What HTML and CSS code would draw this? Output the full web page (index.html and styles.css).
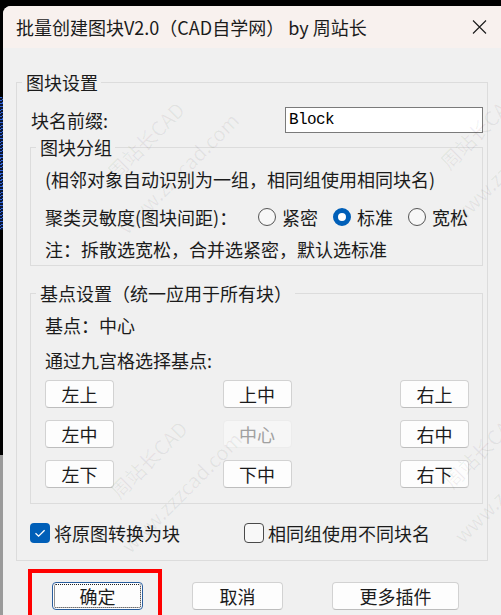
FILE: index.html
```html
<!DOCTYPE html>
<html lang="zh-CN">
<head>
<meta charset="utf-8">
<title>批量创建图块</title>
<link rel="stylesheet" href="styles.css">
</head>
<body>
<div class="screen">
  <div class="strip"></div>
  <div class="window">
    <div class="titlebar">
      <span class="title">批量创建图块V2.0（CAD自学网） by 周站长</span>
      <svg class="close" width="15" height="14" viewBox="0 0 15 14"><path d="M1 0.5 L14 13.5 M14 0.5 L1 13.5" stroke="#1b1b1b" stroke-width="1.1" fill="none"/></svg>
    </div>
    <div class="client">
      <fieldset class="group outer">
        <legend>图块设置</legend>
        <div class="prefix-row">
          <label class="prefix-label" for="prefix">块名前缀:</label>
          <input id="prefix" class="prefix-input" type="text" value="Block">
        </div>
        <fieldset class="group inner g1">
          <legend>图块分组</legend>
          <div class="line first">(相邻对象自动识别为一组，相同组使用相同块名)</div>
          <div class="line radio-row">
            <span class="radio-label">聚类灵敏度(图块间距)：</span>
            <span class="radio-item"><span class="radio"></span>紧密</span>
            <span class="radio-item"><span class="radio on"></span>标准</span>
            <span class="radio-item"><span class="radio"></span>宽松</span>
          </div>
          <div class="line note">注：拆散选宽松，合并选紧密，默认选标准</div>
        </fieldset>
        <fieldset class="group inner g2">
          <legend>基点设置（统一应用于所有块）</legend>
          <div class="line first">基点：中心</div>
          <div class="line hint">通过九宫格选择基点:</div>
          <div class="grid9">
            <button class="btn small">左上</button>
            <button class="btn small">上中</button>
            <button class="btn small">右上</button>
            <button class="btn small">左中</button>
            <button class="btn small disabled">中心</button>
            <button class="btn small">右中</button>
            <button class="btn small">左下</button>
            <button class="btn small">下中</button>
            <button class="btn small">右下</button>
          </div>
        </fieldset>
        <div class="checks">
          <span class="check-item first-check"><span class="checkbox on"><svg width="20" height="20" viewBox="0 0 20 20"><path d="M5.5 10.2 L8.6 13.2 L14.6 7.2" stroke="#fff" stroke-width="1.3" fill="none"/></svg></span>将原图转换为块</span>
          <span class="check-item"><span class="checkbox"></span>相同组使用不同块名</span>
        </div>
      </fieldset>
      <div class="actions">
        <button class="btn action primary">确定</button>
        <button class="btn action">取消</button>
        <button class="btn action wide">更多插件</button>
      </div>
    </div>
    <div class="wm wm-a"><div>周站长CAD</div><div>www.zzzcad.com</div></div>
    <div class="wm wm-b"><div>周站长CAD</div><div>www.zzzcad.com</div></div>
    <div class="wm wm-c"><div>周站长CAD</div><div>www.zzzcad.com</div></div>
    <div class="wm wm-d"><div>周站长CAD</div><div>www.zzzcad.com</div></div>
    <div class="highlight"></div>
  </div>
</div>
</body>
</html>
```
FILE: styles.css
```css
html, body {
  margin: 0;
  padding: 0;
}
body {
  width: 501px;
  height: 615px;
  overflow: hidden;
  background: #000;
  font-family: "Noto Sans CJK SC", "Liberation Sans", sans-serif;
  color: #1b1b1b;
}
.screen {
  display: flex;
  height: 615px;
}
.strip {
  width: 3px;
  flex: none;
  background:
    repeating-linear-gradient(160deg, #2f62d8 0 1px, #0a1632 1px 3px) 0 97px / 3px 133px no-repeat,
    linear-gradient(to bottom, #000 0 455px, #9a9a9a 455px);
}
.window {
  position: relative;
  margin-top: 6px;
  width: 498px;
  height: 609px;
  flex: none;
  border-top-left-radius: 8px;
  overflow: hidden;
  background: #f0f0f0;
}
.titlebar {
  height: 42px;
  background: #f8f1ee;
  display: flex;
  align-items: center;
  padding: 0 14px 0 13px;
}
.title {
  flex: 1;
  font-size: 18px;
  line-height: 1;
  color: #1b1b1b;
  white-space: nowrap;
}
.close {
  display: block;
  flex: none;
}
.client {
  padding: 22px 0 0 13px;
}
.group {
  margin: 0;
  min-width: 0;
  box-sizing: border-box;
  border: 1px solid #dcdcdc;
}
.group > legend {
  font-size: 18px;
  line-height: 24px;
  padding: 0 3px 0 4px;
  color: #1b1b1b;
  white-space: nowrap;
}
.outer {
  width: 472px;
  padding: 0 4px 17px 13px;
}
.outer > legend {
  margin-left: -8px;
}
.prefix-row {
  display: flex;
  align-items: center;
  height: 26px;
  margin-top: 13px;
}
.prefix-label {
  margin-left: 1px;
  font-size: 18px;
  line-height: 24px;
}
.prefix-input {
  margin: 0 0 0 auto;
  width: 198px;
  height: 26px;
  box-sizing: border-box;
  border: 1px solid #7a7a7a;
  background: #fff;
  padding: 0 0 0 3px;
  font-family: "Liberation Mono", monospace;
  font-size: 16px;
  letter-spacing: -0.6px;
  color: #000;
  outline: none;
}
.inner {
  width: 100%;
}
.inner > legend {
  margin-left: -9px;
}
.g1 {
  margin-top: 2px;
  padding: 8px 13px 4px 14px;
}
.g2 {
  margin-top: 15px;
  padding: 8px 13px 15px 14px;
}
.line {
  font-size: 18px;
  line-height: 24px;
  height: 24px;
  white-space: nowrap;
}
.radio-row {
  margin-top: 14px;
  display: flex;
  align-items: center;
}
.note {
  margin-top: 8px;
}
.hint {
  margin-top: 11px;
}
.radio-label {
  width: 213px;
  flex: none;
}
.radio-item {
  display: flex;
  align-items: center;
  gap: 6px;
  margin-right: 15px;
}
.radio {
  width: 18px;
  height: 18px;
  box-sizing: border-box;
  border: 1px solid #555;
  border-radius: 50%;
  background: #f7f7f7;
}
.radio.on {
  border: 5px solid #005fb8;
  background: #fff;
}
.grid9 {
  margin-top: 8px;
  display: grid;
  grid-template-columns: 69px 69px 69px;
  justify-content: space-between;
  row-gap: 12px;
}
.btn {
  margin: 0;
  padding: 0;
  height: 28px;
  box-sizing: border-box;
  border: 1px solid #d2d2d2;
  border-bottom-color: #bdbdbd;
  border-radius: 4px;
  background: #fdfdfd;
  font-family: "Noto Sans CJK SC", sans-serif;
  font-size: 18px;
  line-height: 1;
  color: #1b1b1b;
  display: flex;
  align-items: center;
  justify-content: center;
}
.btn.disabled {
  background: #f6f6f6;
  border-color: #ececec;
  color: #a0a0a0;
}
.checks {
  margin-top: 19px;
  display: flex;
  align-items: center;
  height: 20px;
  font-size: 18px;
  line-height: 24px;
}
.check-item {
  display: flex;
  align-items: center;
  gap: 4px;
  white-space: nowrap;
}
.first-check {
  width: 214px;
  flex: none;
}
.checkbox {
  width: 20px;
  height: 20px;
  box-sizing: border-box;
  border: 1px solid #4a4a4a;
  border-radius: 4px;
  background: #f8f8f8;
  flex: none;
}
.checkbox svg {
  display: block;
}
.checkbox.on {
  border: none;
  background: #005fb8;
}
.actions {
  margin: 21px 0 0 36px;
  display: flex;
  gap: 49px;
}
.action {
  width: 91px;
}
.action.wide {
  width: 127px;
}
.primary {
  border-color: #2a5e9e;
  outline: 1px dotted #222;
  outline-offset: -3px;
}
.wm {
  position: absolute;
  width: 220px;
  height: 92px;
  font-family: "Noto Sans CJK SC", "Liberation Sans", sans-serif;
  font-size: 20px;
  line-height: 46px;
  text-align: center;
  color: rgba(0, 0, 0, 0.06);
  transform: rotate(-45deg);
  pointer-events: none;
  white-space: nowrap;
}
.wm-a { left: 49px; top: 105px; }
.wm-b { left: 52px; top: 424px; }
.wm-c { left: 382px; top: 95px; }
.wm-d { left: 385px; top: 414px; }
.highlight {
  position: absolute;
  left: 25px;
  top: 563px;
  width: 134px;
  height: 60px;
  box-sizing: border-box;
  border: 4px solid #ff0000;
  pointer-events: none;
}
```
